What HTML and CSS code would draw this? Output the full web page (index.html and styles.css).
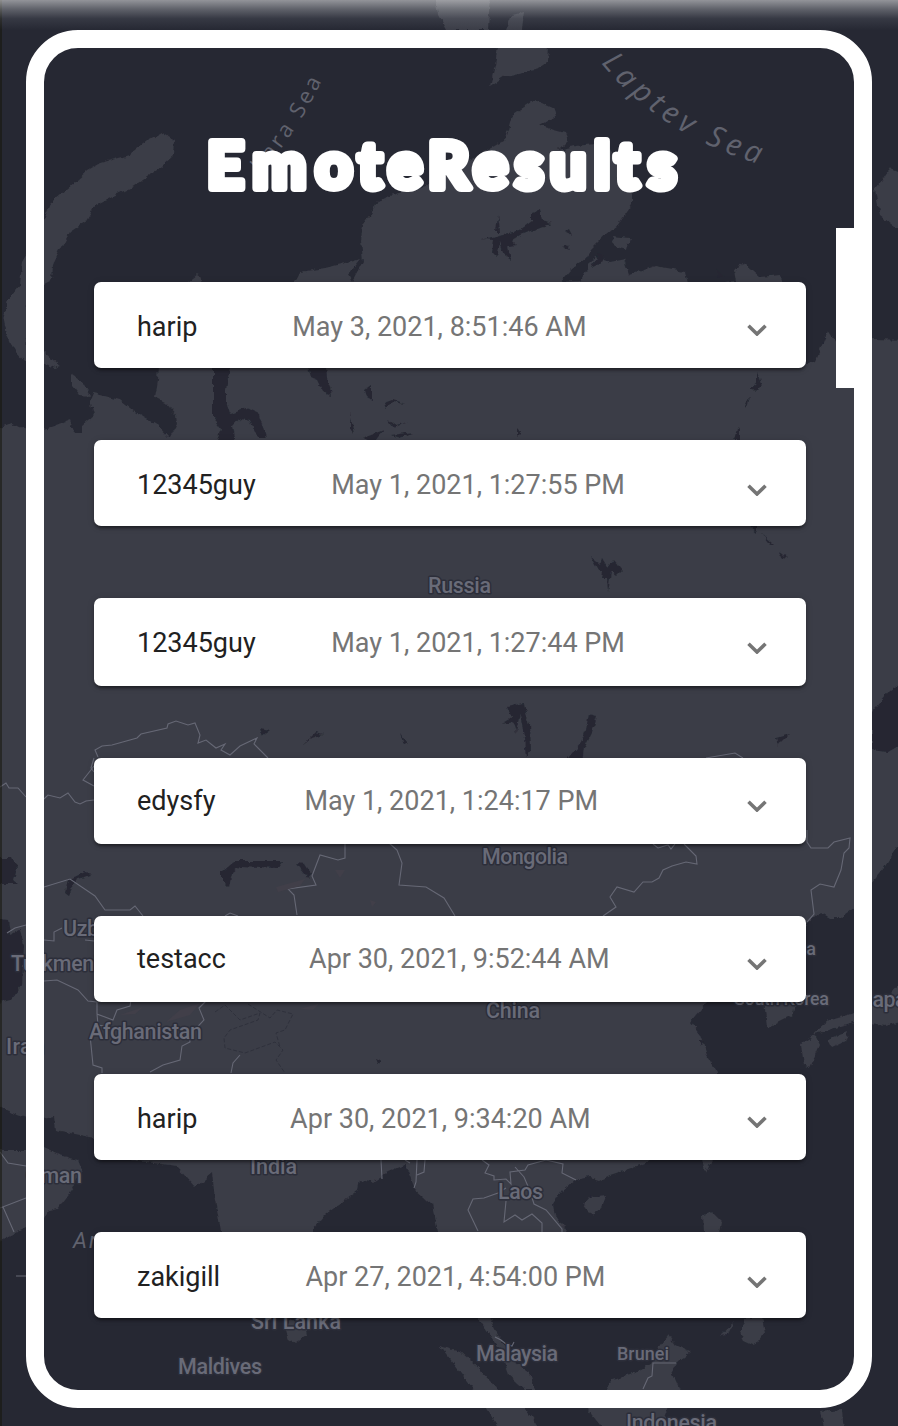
FILE: index.html
```html
<!DOCTYPE html>
<html lang="en">
<head>
<meta charset="utf-8">
<title>EmoteResults</title>
<link rel="stylesheet" href="styles.css">
</head>
<body>
<svg class="map" viewBox="0 0 898 1426" aria-hidden="true">
  <defs>
    <filter id="coast" x="0" y="0" width="100%" height="100%">
      <feTurbulence type="fractalNoise" baseFrequency="0.13" numOctaves="3" seed="4"/>
      <feDisplacementMap in="SourceGraphic" scale="6" xChannelSelector="R" yChannelSelector="G"/>
    </filter>
    <path id="kara" d="M260 174Q298 132 323 78"/>
    <path id="laptev" d="M601 63Q662 138 772 168"/>
  </defs>
  <g filter="url(#coast)">
    <g class="land">
      <path d="M-9 430L12 423L26 430L44 430L70 420L75 433L82 433L82 425L94 415L90 400L93 393L120 400L135 412L160 427L170 438L177 425L176 415L165 402L155 397L158 380L160 350L188 282L198 274L205 290L240 320L285 300L300 272L325 268L350 262L361 259L348 275L352 282L363 262L361 240L363 225L372 213L377 203L390 195L425 187L455 170L470 160L505 140L512 115L535 100L553 108L556 116L540 126L565 133L568 140L558 150L575 146L605 143L620 170L632 195L632 205L618 225L600 240L590 250L585 258L570 270L560 282L580 281L595 256L610 262L625 259L630 275L655 266L685 271L688 286L736 282L734 270L745 264L760 277L780 275L785 290L800 350L808 364L815 362L822 345L828 330L836 342L872 339L910 340V842L898 846L884 868L872 883L854 908L840 918L830 918L820 912L806 924L790 950L765 960L795 1003L793 1015L767 1028L763 990L735 980L706 1003L690 1022L700 1035L707 1055L718 1073L715 1110L680 1150L640 1165L610 1175L600 1180L590 1177L575 1180L562 1190L553 1205L555 1215L568 1234L580 1265L550 1290L520 1270L480 1260L478 1290L490 1318L500 1338L515 1362L530 1373L535 1390L525 1390L508 1375L500 1350L478 1318L468 1280L460 1240L438 1232L432 1205L415 1190L405 1165L388 1172L372 1182L360 1180L358 1190L325 1215L312 1230L290 1270L270 1305L255 1305L235 1270L221 1232L215 1200L212 1172L195 1187L176 1166L130 1160L94 1138L56 1130L54 1116L44 1118L26 1118L12 1113L-9 1102Z"/>
      <path d="M162 132L175 140L174 155L160 168L130 188L95 205L85 222L70 232L60 250L53 265L52 280L44 284L28 300L26 362L15 350L6 335L3 320L8 300L20 285L22 262L35 240L44 220L50 203L66 190L88 170L100 163L130 155L148 140Z"/>
      <path d="M44 352L60 366L54 368L40 362ZM72 375L82 382L90 396L80 395L72 385ZM435 -5L438 15L446 30H488L490 -5ZM506 30L512 15L524 12L522 30ZM498 46H548L547 62L535 70L505 76L490 86L495 65ZM875 190L890 168L910 176V228L896 228L880 215ZM-9 1150L26 1150L44 1148L60 1155L78 1160L82 1170L73 1188L68 1195L58 1208L50 1210L44 1218L20 1230L-9 1245ZM286 1330L290 1320L305 1325L307 1335L295 1344L289 1340ZM440 1346L460 1352L480 1370L500 1392L525 1408L540 1430H500L478 1395ZM606 1390L612 1380L630 1375L650 1365L660 1345L668 1335L675 1345L690 1352L678 1362L672 1372L680 1390L672 1400L660 1430H604L588 1410ZM720 1335L734 1322L728 1334ZM740 1332L745 1318L762 1318L765 1332L755 1345L744 1340ZM703 1215L712 1212L722 1222L720 1234H704ZM583 1205L590 1197L606 1195L600 1210L590 1215ZM702 1155H714L706 1173ZM812 1035L830 1020L854 1013L872 1007L885 1000L898 985H910V1018L885 1026L854 1022ZM800 1045L815 1035L820 1045L810 1068L803 1065ZM828 1040L848 1032L845 1042L832 1048ZM612 236L630 238L627 250L615 247ZM820 1412L842 1410L844 1430H825Z"/>
    </g>
    <g class="water">
      <path d="M213 365L230 366L226 390L226 402L230 414L246 408L259 414L266 438H258L250 420L240 418L233 426L236 445H216L222 430L213 418ZM-9 858L12 858L17 868L14 880L20 884H-9ZM-9 918L8 920L10 935L20 930L24 945L22 985L10 1000L-9 1005ZM912 676L890 690L872 712V750L888 752L912 738Z"/>
      <path d="M222 872L235 861L282 861L277 868L240 866L232 873L229 887L222 880ZM589 714L597 716L592 732L584 748L582 762H566L581 743L586 730ZM296 863L305 864L312 875L309 879ZM68 880L85 872L92 874L76 880L69 896L65 893ZM308 367H326L327 378L332 395L324 392L318 380L311 377ZM365 390L372 385V400L367 397ZM480 240L520 230L532 221L532 213L540 210L542 220L552 223L520 235L512 240L517 245L508 246L511 262L506 258L500 242L497 257L492 252L494 240L486 239ZM498 215L500 232H496ZM260 728L270 730L262 736ZM302 746L316 732L323 734L312 738ZM507 707L524 703L526 712L530 725L531 750L526 757L523 730L520 715L516 732L513 722L502 724L512 718ZM590 556L600 564L602 558L608 568L614 560L622 570L616 576L611 572L608 592L607 578L602 578L603 572L598 570ZM776 738L790 734L782 742L778 747ZM758 372L762 384L755 391L750 389L758 382ZM744 408L750 396L748 406ZM735 440L739 425V440ZM748 525L757 527V533ZM762 534L773 544L770 545ZM778 550L788 558L782 557ZM376 1058L382 1061L378 1064ZM384 403L392 400L406 405L392 403L386 409ZM350 412L354 435L350 428ZM388 420L396 425L408 422L394 428ZM390 435L414 432L400 438ZM362 438L384 430L374 442ZM517 428L521 433L517 437ZM698 1040L704 1042L701 1046ZM716 268L724 276L718 279ZM565 232L569 229L572 235ZM562 247L568 245L570 251ZM600 251L604 262L592 268ZM400 732L408 744L403 741Z"/>
    </g>
  </g>
  <g class="borders">
    <path d="M0 787L6 783L9 788H18L26 797M44 799L48 795L60 798L68 793L75 802L80 804L86 801L94 800M94 772L91 768L94 758M98 757L95 750L102 746L112 745L137 738L141 734L167 728L168 724L176 721L188 725L195 723L200 735L198 743L206 740L216 748L225 744L221 750L230 755L240 746L257 738L254 744L268 758M94 766L83 780L94 786M44 887L70 879L95 896L105 910H130L135 906L143 916M225 916L230 913L238 916M345 843V858L338 860L320 855L312 876L316 885L288 889L294 895L297 915M389 843L397 850L402 863L399 885L426 887L444 898L455 916M653 844L658 848L668 845L671 849L675 844M684 844L696 856L697 864L686 862L672 866L663 870L659 878L652 882H643L634 892L617 887L610 897L616 907L603 916M807 830V842L811 848H828L834 842L850 838L849 848L844 853L841 870L834 887L820 884L811 890L814 914L807 922M706 758L735 753L743 758"/>
    <path d="M44 940L54 941V932L62 928M7 933L15 928L26 925M85 940L94 941M44 981L57 980L78 990L88 1001L97 1002V1014L113 1020L117 1010L130 1006L131 1000M97 1014L98 1025L110 1027M207 1000L199 1008L204 1020L189 1036L190 1042L182 1046L180 1060L163 1065L150 1072M91 1045L90 1035L93 1065L102 1068V1073M240 1055L233 1063L231 1073M0 1152L8 1163L26 1166M0 1208L26 1198M3 1207L14 1232M381 1160L382 1179M405 1160L410 1163M417 1160L416 1182L414 1188M425 1160L424 1172L417 1175M482 1160L489 1165L485 1173L494 1176V1180L506 1179L511 1184L510 1172L525 1170L528 1165L546 1160L563 1164L562 1173L576 1180M515 1167L524 1177L530 1191L534 1204L546 1210L562 1229V1232M506 1188L498 1193L484 1198L473 1199L468 1210L478 1231M506 1201L504 1222L515 1215L522 1220L532 1214L542 1223V1232M495 1337L501 1340L506 1344L512 1346L514 1342M643 1389L648 1378L652 1376L653 1363H676M16 1276H26"/>
  </g>
  <g class="dashes"><path d="M215 1012L225 1005L240 1020L260 1013L258 1020L230 1030L224 1038L225 1048L245 1053L275 1042L283 1050L276 1060L285 1073M248 1004L270 1018L277 1010L293 1014L285 1030L276 1033L280 1047"/></g>
  <g class="relief"><path d="M276 887L305 879L300 886L278 892ZM180 1010L200 1003L190 1015L166 1022ZM120 1015L143 1007L135 1014ZM300 1009L320 1003L313 1010ZM335 870H345L340 878ZM370 900L376 902L372 907Z"/></g>
  <g class="places">
    <text x="428" y="593" textLength="63">Russia</text>
    <text x="482" y="864" textLength="86">Mongolia</text>
    <text x="63" y="936" textLength="103">Uzbekistan</text>
    <text x="11" y="971" textLength="129">Turkmenistan</text>
    <text x="89" y="1039" textLength="113">Afghanistan</text>
    <text x="6" y="1054" textLength="38">Iran</text>
    <text x="486" y="1018" textLength="54">China</text>
    <text x="720" y="955" textLength="96" class="small">North Korea</text>
    <text x="734" y="1005" textLength="95" class="small">South Korea</text>
    <text x="861" y="1007" textLength="57">Japan</text>
    <text x="250" y="1174" textLength="47">India</text>
    <text x="26" y="1183" textLength="56">Oman</text>
    <text x="498" y="1199" textLength="45">Laos</text>
    <text x="251" y="1329" textLength="90">Sri Lanka</text>
    <text x="178" y="1374" textLength="84">Maldives</text>
    <text x="476" y="1361" textLength="82">Malaysia</text>
    <text x="617" y="1360" textLength="52" class="small">Brunei</text>
    <text x="626" y="1430" textLength="91">Indonesia</text>
  </g>
  <g class="seas">
    <text class="kara"><textPath href="#kara" textLength="112">Kara Sea</textPath></text>
    <text class="laptev"><textPath href="#laptev" textLength="190">Laptev Sea</textPath></text>
    <text x="73" y="1248" textLength="136" class="arabian">Arabian Sea</text>
  </g>
</svg>
<div class="edge"></div>
<div class="haze"></div>

<main class="panel">
  <h1 class="title">
    <svg class="wordmark" viewBox="0 0 480 70" role="img" aria-label="EmoteResults">
      <text y="56" x="3 48.500 111.500 154 184 224 269.500 311 346 390 411 444">EmoteResults</text>
    </svg>
  </h1>
  <div class="scroller">
    <section class="results">
      <article class="result"><span class="name">harip</span><time class="date">May 3, 2021, 8:51:46 AM</time><i class="spacer"></i><svg class="chevron high" viewBox="0 0 20 12"><path d="M1.5 1.8L10 10L18.500 1.8"/></svg></article>
      <article class="result"><span class="name">12345guy</span><time class="date">May 1, 2021, 1:27:55 PM</time><i class="spacer"></i><svg class="chevron" viewBox="0 0 20 12"><path d="M1.5 1.8L10 10L18.500 1.8"/></svg></article>
      <article class="result tall"><span class="name">12345guy</span><time class="date">May 1, 2021, 1:27:44 PM</time><i class="spacer"></i><svg class="chevron" viewBox="0 0 20 12"><path d="M1.5 1.8L10 10L18.500 1.8"/></svg></article>
      <article class="result raised"><span class="name">edysfy</span><time class="date">May 1, 2021, 1:24:17 PM</time><i class="spacer"></i><svg class="chevron" viewBox="0 0 20 12"><path d="M1.5 1.8L10 10L18.500 1.8"/></svg></article>
      <article class="result raised"><span class="name">testacc</span><time class="date">Apr 30, 2021, 9:52:44 AM</time><i class="spacer"></i><svg class="chevron" viewBox="0 0 20 12"><path d="M1.5 1.8L10 10L18.500 1.8"/></svg></article>
      <article class="result"><span class="name">harip</span><time class="date">Apr 30, 2021, 9:34:20 AM</time><i class="spacer"></i><svg class="chevron high" viewBox="0 0 20 12"><path d="M1.5 1.8L10 10L18.500 1.8"/></svg></article>
      <article class="result"><span class="name">zakigill</span><time class="date">Apr 27, 2021, 4:54:00 PM</time><i class="spacer"></i><svg class="chevron" viewBox="0 0 20 12"><path d="M1.5 1.8L10 10L18.500 1.8"/></svg></article>
    </section>
    <div class="thumb"></div>
  </div>
</main>
</body>
</html>
```
FILE: styles.css
```css
* { box-sizing: border-box; }
body {
  margin: 0;
  height: 1426px;
  padding: 30px 26px 18px;
  position: relative;
  overflow: hidden;
  background: #262833;
  font-family: Roboto, sans-serif;
}
.map { position: absolute; inset: 0; width: 898px; height: 1426px; }
.land { fill: #3a3c46; }
.water { fill: #262833; }
.borders { fill: none; stroke: #666875; stroke-width: 1.1; }
.dashes { fill: none; stroke: #2f313c; stroke-width: 1; stroke-dasharray: 4 2; }
.relief { fill: #413f49; }
.places {
  font: 500 21.5px Roboto, sans-serif;
  fill: #696b78;
  stroke: #2c2e3a;
  stroke-width: 3px;
  stroke-linejoin: round;
  paint-order: stroke;
}
.places .small { font-size: 18px; }
.seas { fill: #60626e; font-family: "Open Sans", sans-serif; }
.kara { font-size: 22px; }
.laptev { font-size: 30px; font-style: italic; }
.arabian { font: italic 22px Roboto, sans-serif; }
.edge { position: absolute; inset: 0 auto 0 0; width: 2px; background: rgba(20, 20, 8, .5); }
.haze {
  position: absolute;
  inset: 0 0 auto 0;
  height: 30px;
  background: linear-gradient(rgba(255, 255, 255, .5), rgba(225, 228, 230, .31) 30%, rgba(200, 205, 215, .1) 62%, transparent);
}
.panel {
  position: relative;
  height: 1378px;
  border: 18px solid #fff;
  border-radius: 52px;
  display: flex;
  flex-direction: column;
}
.title { margin: 0; height: 180px; padding: 84px 0 0 160px; line-height: 0; }
.wordmark { width: 480px; height: 70px; overflow: visible; }
.wordmark text {
  font: 700 64px Lato, sans-serif;
  fill: #fff;
  stroke: #fff;
  stroke-width: 8px;
  stroke-linejoin: round;
}
.scroller { display: flex; justify-content: space-between; }
.results {
  width: 712px;
  margin: 54px 0 0 50px;
  display: flex;
  flex-direction: column;
  gap: 72px;
}
.thumb { width: 18px; height: 160px; background: #fff; }
.result {
  height: 86px;
  padding: 28px 39px 0 43px;
  display: flex;
  align-items: flex-start;
  background: #fff;
  border-radius: 7px;
  box-shadow: 0 4px 3px -2px rgba(0, 0, 0, .25), 0 2px 3px rgba(0, 0, 0, .2), 0 1px 7px rgba(0, 0, 0, .15);
  font-size: 27px;
  line-height: 34px;
  white-space: nowrap;
}
.tall { height: 88px; }
.raised { padding-top: 26px; }
.name { flex: 1 1 auto; margin-right: 32px; color: #212121; }
.date { flex: 1 1 auto; margin-left: -1px; margin-right: 33px; color: #757575; }
.spacer { flex: 1 1 0; }
.chevron { width: 20px; height: 12px; margin-top: 16px; flex: none; fill: none; stroke: #757575; stroke-width: 3.6; }
.high { margin-top: 14px; }
```
